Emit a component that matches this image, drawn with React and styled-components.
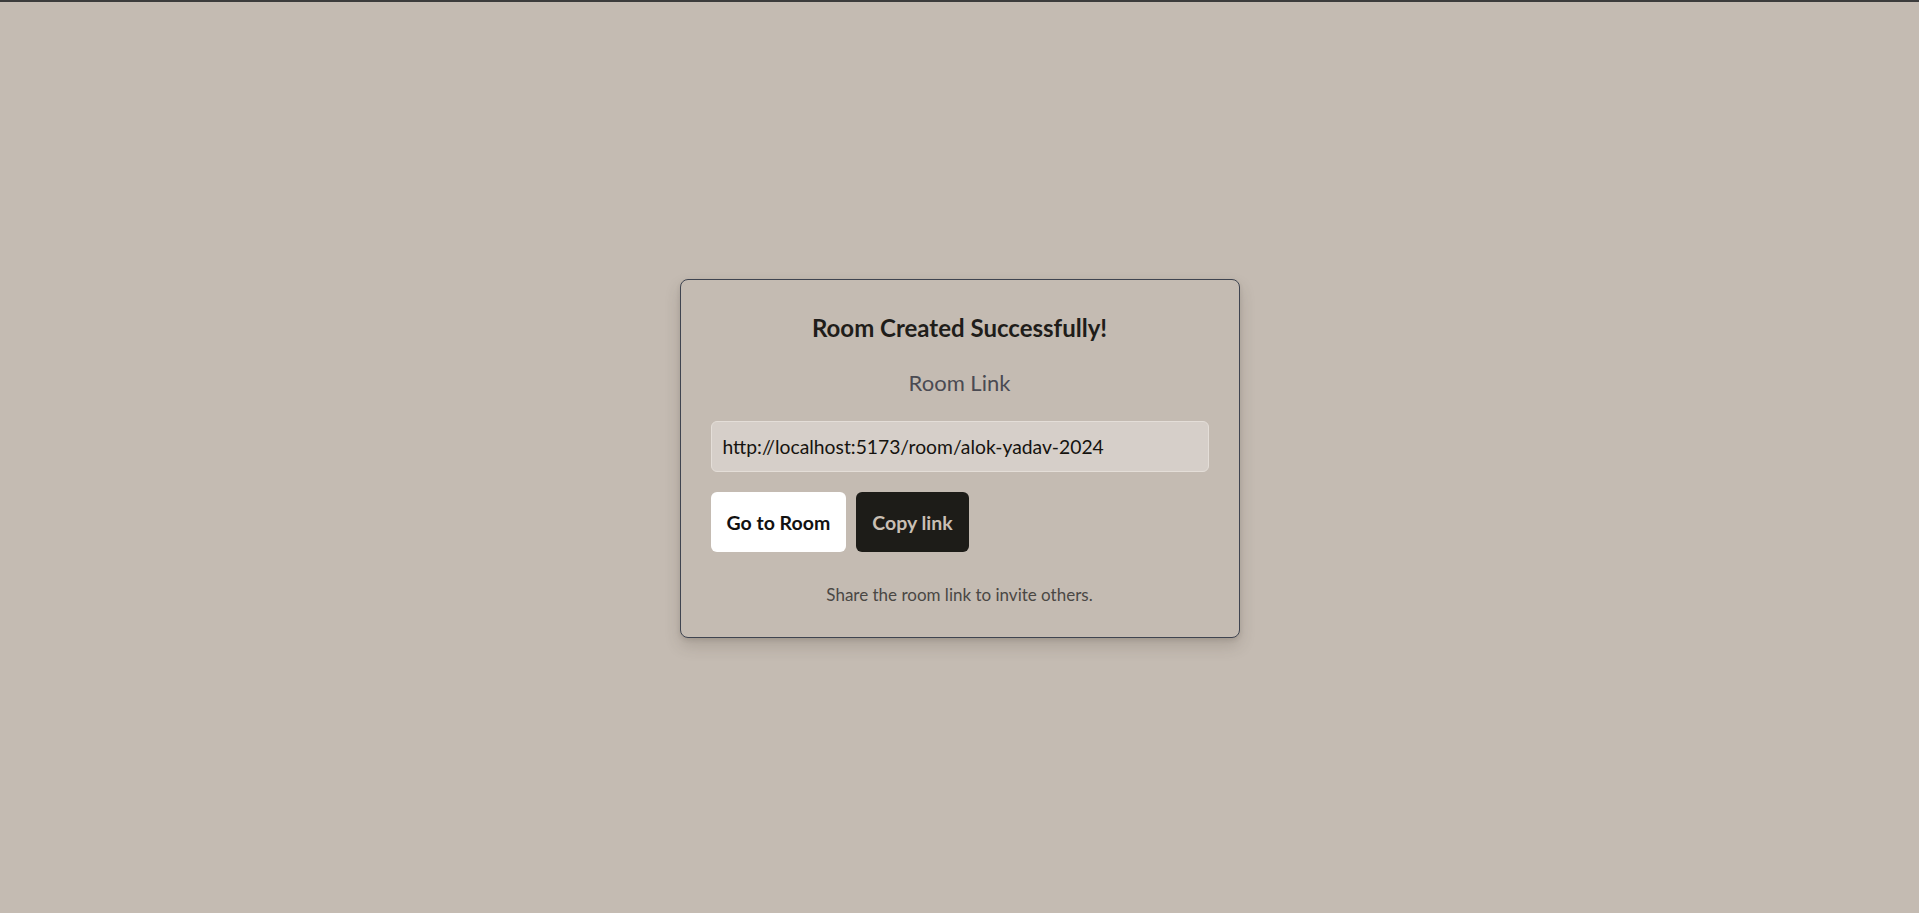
import styled, { createGlobalStyle } from 'styled-components'

const GlobalStyle = createGlobalStyle`
  html, body {
    margin: 0;
    padding: 0;
    background: #c4bbb2;
    font-family: Lato, "Open Sans", sans-serif;
  }
  body {
    border-top: 2px solid #3c3c3c;
  }
  * { box-sizing: border-box; }
`

const Page = styled.div`
  min-height: 911px;
  display: flex;
  align-items: center;
  justify-content: center;
  padding-top: 2px;
`

const Card = styled.div`
  width: 560px;
  padding: 30px;
  border: 1px solid #3f4450;
  border-radius: 8px;
  background: #c4bbb2;
  box-shadow: 0 8px 16px rgba(60, 50, 40, 0.18), 0 2px 4px rgba(60, 50, 40, 0.12);
  display: flex;
  flex-direction: column;
  align-items: stretch;
  text-align: center;
`

const Title = styled.h2`
  margin: 0;
  font-size: 24px;
  line-height: 36px;
  font-weight: 700;
  color: #1f1d1a;
`

const Label = styled.p`
  margin: 23px 0 24px;
  font-size: 22px;
  line-height: 28px;
  color: #4a4a52;
`

const LinkInput = styled.input`
  height: 51px;
  width: 100%;
  padding: 0 11px;
  border: 1px solid #e4ded8;
  border-radius: 6px;
  background: #d6cfc9;
  font-family: inherit;
  font-size: 19.3px;
  color: #15130f;
  outline: none;
`

const Actions = styled.div`
  display: flex;
  gap: 10px;
  margin-top: 20px;
`

const Button = styled.button`
  height: 60px;
  padding: 0 16px;
  border: none;
  border-radius: 6px;
  font-family: inherit;
  font-size: 19.5px;
  font-weight: 700;
  cursor: pointer;
  background: ${(p) => (p.$dark ? '#1d1c18' : '#ffffff')};
  color: ${(p) => (p.$dark ? '#c9bfb4' : '#111111')};
`

const Note = styled.p`
  margin: 31px 0 0;
  font-size: 17px;
  line-height: 24px;
  color: #4a4744;
`

const roomLink = 'http://localhost:5173/room/alok-yadav-2024'

const App = () => {
  return (
    <>
      <GlobalStyle />
      <Page>
        <Card>
          <Title>Room Created Successfully!</Title>
          <Label>Room Link</Label>
          <LinkInput type="text" value={roomLink} readOnly />
          <Actions>
            <Button>Go to Room</Button>
            <Button $dark onClick={() => navigator.clipboard?.writeText(roomLink)}>Copy link</Button>
          </Actions>
          <Note>Share the room link to invite others.</Note>
        </Card>
      </Page>
    </>
  )
}

export default App
